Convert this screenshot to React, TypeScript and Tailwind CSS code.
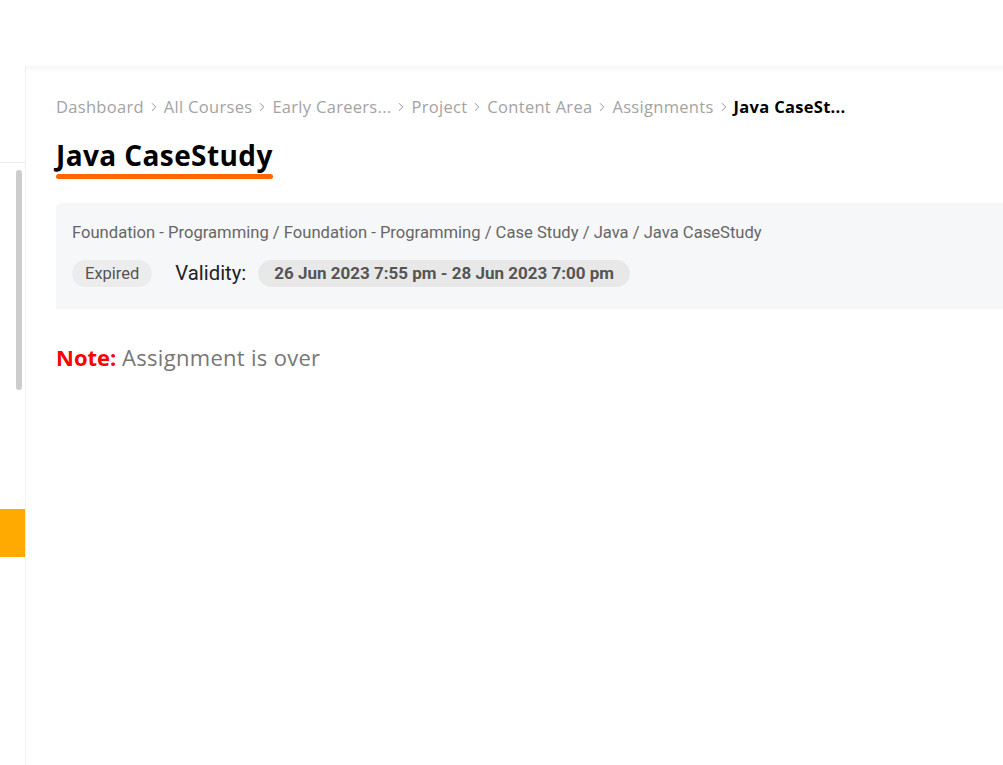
import { ChevronRight } from 'lucide-react';

const crumbs = ['Dashboard', 'All Courses', 'Early Careers...', 'Project', 'Content Area', 'Assignments'];

export default function App() {
  return (
    <div className="flex h-screen w-full flex-col overflow-hidden bg-white">
      {/* top bar */}
      <header className="h-[66px] shrink-0 bg-white" />

      <div className="flex min-h-0 flex-1">
        {/* collapsed sidebar */}
        <aside className="flex w-[26px] shrink-0 flex-col border-r border-[#efefef] bg-white">
          <div className="h-[97px] border-b border-[#ececec]" />
          <div className="flex justify-end pr-[3px] pt-[7px]">
            <div className="h-[220px] w-[6px] rounded-full bg-[#cccccc]" />
          </div>
          <div className="mt-[119px] h-[48px] w-[25px] bg-[#ffaa00]" />
        </aside>

        {/* main panel */}
        <main className="relative min-w-0 flex-1 bg-gradient-to-b from-[#f6f6f6] via-white to-white bg-[length:100%_12px] bg-no-repeat pl-[30px] pt-[21px]">
          <nav className="flex items-center whitespace-nowrap text-[16.5px] leading-[40px] tracking-[0.3px] text-[#a3a3a3] font-['Open_Sans',sans-serif]">
            {crumbs.map((c) => (
              <span key={c} className="flex items-center">
                <span>{c}</span>
                <ChevronRight size={14} strokeWidth={1.6} className="mx-[3px] text-[#8a8a8a]" />
              </span>
            ))}
            <span className="font-bold text-black">Java CaseSt...</span>
          </nav>

          <div className="mt-[10px] inline-flex flex-col">
            <h1 className="text-[28px] font-bold leading-[36px] tracking-[0.4px] text-black font-['Open_Sans',sans-serif]">
              Java CaseStudy
            </h1>
            <div className="mt-[1px] h-[5px] rounded-full bg-[#ff6600]" />
          </div>

          <section className="mt-[24px] rounded-tl-[6px] bg-[#f6f7f8] pb-[22px] pl-[16px] pt-[19px]">
            <p className="whitespace-nowrap text-[16.6px] leading-[22px] text-[#666666] font-['Roboto',sans-serif]">
              Foundation - Programming / Foundation - Programming / Case Study / Java / Java CaseStudy
            </p>
            <div className="mt-[16px] flex items-center">
              <span className="rounded-full bg-[#ececec] px-[13px] text-[16.5px] leading-[27px] text-[#555555] font-['Roboto',sans-serif]">
                Expired
              </span>
              <span className="ml-[23px] text-[20.3px] leading-[27px] text-[#222222] font-['Roboto',sans-serif]">
                Validity:
              </span>
              <span className="ml-[12px] rounded-full bg-[#e8e8e8] px-[16px] text-[17px] font-bold leading-[27px] text-[#555555] font-['Roboto',sans-serif]">
                26 Jun 2023 7:55 pm - 28 Jun 2023 7:00 pm
              </span>
            </div>
          </section>

          <p className="mt-[33px] text-[22px] leading-[30px] font-['Open_Sans',sans-serif]">
            <span className="font-bold text-[#ff0000]">Note:</span>{' '}
            <span className="tracking-[0.3px] text-[#777777]">Assignment is over</span>
          </p>
        </main>
      </div>
    </div>
  );
}
